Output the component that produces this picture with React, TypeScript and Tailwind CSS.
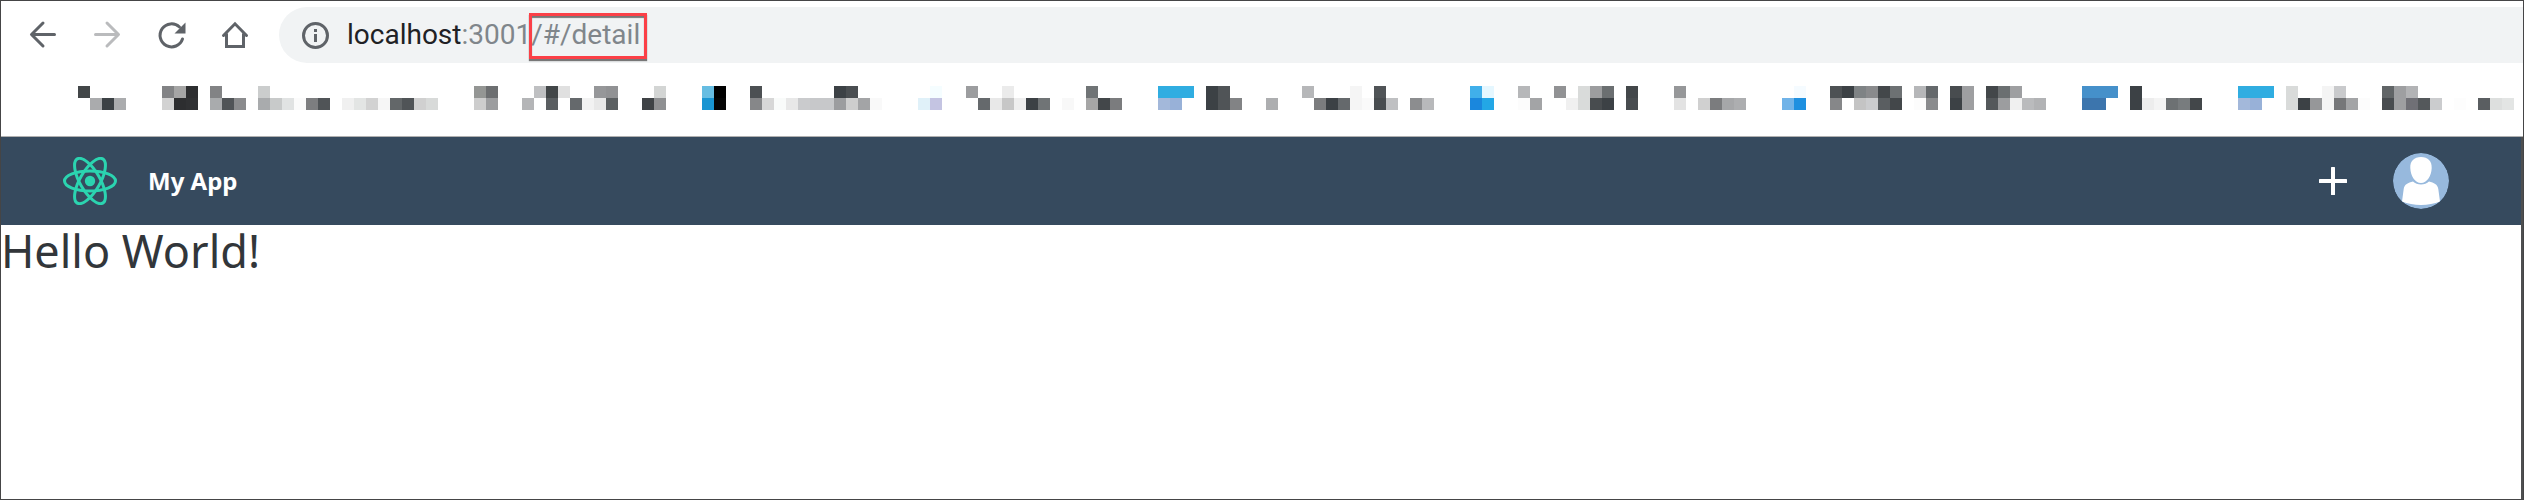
type Cell = [column: number, row: 0 | 1, colors: string];

const CELL = 12;

const mosaic: Cell[] = [
  [6, 0, "424648"],
  [7, 1, "aaabad 3c4145 abacae"],
  [13, 0, "828385 a5a5a5 2d2e30"],
  [13, 1, "d2d2d2 2d2e30 303133"],
  [17, 0, "828385"],
  [17, 1, "a9abad 505457 8a8b8d"],
  [21, 0, "cbcdcd"],
  [21, 1, "a9abad c8caca e1e3e3 fbfbfb 7d7e80 505457"],
  [28, 1, "f0f0f0 e3e5e4 d2d2d2 f6f6f6 636769 505457 d0d0d0 d8dad9"],
  [39, 0, "949694 6d6f71"],
  [39, 1, "cdcdcd 9c9d9f"],
  [43, 1, "b4b5b7"],
  [44, 0, "bfc0c2 424648 e0e0e0"],
  [45, 1, "5a5e61"],
  [47, 1, "65696c f2f2f2 e8e8e8 5c6062"],
  [49, 0, "969799 919294"],
  [53, 1, "3f4346 8f9092"],
  [54, 0, "d3d5d4"],
  [58, 0, "66bde2 000000"],
  [58, 1, "1995d2 050505"],
  [62, 0, "4c5053"],
  [62, 1, "868789 d7d7d7 f9fbfa e8e8e8 cacbcd c7c8ca c7c8ca 9c9d9f cecece a3a4a6 f9f9f9"],
  [69, 0, "3c4145 4a4e51"],
  [76, 1, "e0f1f9 c4c4e2"],
  [77, 0, "f5fdff"],
  [80, 0, "9c9d9f"],
  [81, 1, "65696c e8e8e8 c7c7c7 eeeeee 3c4145 707476"],
  [83, 0, "ebebeb"],
  [88, 1, "f8f8f8"],
  [90, 0, "707476"],
  [90, 1, "a6a6a6 43474a 7b7c7e"],
  [96, 0, "30ade1 30ade1 30ade1"],
  [96, 1, "a3b8da 98b1d8"],
  [100, 0, "3c4145 505457"],
  [100, 1, "3c4145 505457 828385"],
  [105, 1, "adaeb0"],
  [108, 0, "b6b7b9"],
  [109, 1, "7b7c7e 3c4145 65696c f5f5f5 fafafa 484c4f bfc0c2"],
  [112, 0, "f5f5f5"],
  [114, 0, "505457"],
  [117, 1, "8c8d8f b8b9bb"],
  [122, 0, "40afea e5f7ff"],
  [122, 1, "1a87dd 23a7e6"],
  [126, 0, "b6b7b9"],
  [126, 1, "fcfcfc a3a4a6"],
  [129, 0, "919294"],
  [130, 1, "f0f0f0 d9dbda 484c4f 3c4145"],
  [131, 0, "d9dbda 9c9d9f 6b6f71"],
  [135, 0, "43474a"],
  [135, 1, "484c4f"],
  [139, 0, "969799"],
  [139, 1, "e3e3e3"],
  [141, 1, "d0d0d0 7b7c7e a6a7a9 adaeb0"],
  [148, 1, "70b3e8 1e90e0"],
  [149, 0, "f5fbff"],
  [152, 0, "4d5154 3c4145 7f8385 8a8b8d 43474a 6d7173"],
  [152, 1, "868789"],
  [154, 1, "c4c4c4 cbccce 5a5e61 43474a"],
  [159, 0, "b6b7b9 65696c"],
  [159, 1, "fcfcfc 8a8b8d"],
  [162, 0, "484c4f 9e9fa1"],
  [162, 1, "3c4145 9e9fa1"],
  [165, 0, "43474a 6b6f71 9e9fa1"],
  [165, 1, "54585b 9c9d9f f0f0f0 babbbd b2b3b5"],
  [173, 0, "4590ca 4590ca 4590ca"],
  [173, 1, "3c75ad 3c75ad"],
  [177, 0, "3c4145"],
  [177, 1, "3c4145 ededed f4f4f4 6d7173 787c7e 43474a"],
  [186, 0, "30ade1 30ade1 30ade1"],
  [186, 1, "a3b8da 98b1d8"],
  [190, 0, "d9dbda"],
  [190, 1, "d9dbda 3c4145 969799 f4f4f4 767779 a3a4a6 fcfcfc"],
  [193, 0, "f4f4f4 c9cacc"],
  [198, 0, "616567 9e9fa1 b2b3b5"],
  [198, 1, "484c4f 9e9fa1 707076 54585b cbccce"],
  [204, 1, "fdfdfd"],
  [206, 1, "5a5e61 dddfde e3e5e4"],
];

function BookmarksBar() {
  return (
    <div className="flex h-[74px] overflow-hidden border-b border-[#b0b0b0] pl-[5px] pt-[23px]">
      <svg width={2514} height={24} className="shrink-0" shapeRendering="crispEdges" aria-hidden="true">
        {mosaic.flatMap(([column, row, colors]) =>
          colors.split(" ").map((color, i) => (
            <rect
              key={`${column + i}-${row}`}
              x={(column + i) * CELL}
              y={row * CELL}
              width={CELL}
              height={CELL}
              fill={`#${color}`}
            />
          )),
        )}
      </svg>
    </div>
  );
}

const stroke = {
  fill: "none",
  stroke: "currentColor",
  strokeWidth: 3,
  strokeLinecap: "round" as const,
  strokeLinejoin: "round" as const,
};

function BrowserToolbar() {
  return (
    <div className="flex h-[62px] items-center pl-[26px] pt-[6px]">
      <div className="flex gap-8 text-[#5f6368]">
        <button type="button" aria-label="Back" className="size-8">
          <svg viewBox="0 0 32 32" {...stroke}>
            <path d="M27.500 15.500H5M16 4 4.500 15.500 16 27" />
          </svg>
        </button>
        <button type="button" aria-label="Forward" className="size-8 text-[#babbbd]">
          <svg viewBox="0 0 32 32" {...stroke}>
            <path d="M4.500 15.500H27M16 4 27.500 15.500 16 27" />
          </svg>
        </button>
        <button type="button" aria-label="Reload" className="size-8">
          <svg viewBox="0 0 32 32" {...stroke}>
            <path d="M27.500 20A11.500 11.500 0 1 1 24.500 8" />
            <path d="M30.500 3.500V14.500H19.500Z" fill="currentColor" stroke="none" />
          </svg>
        </button>
        <button type="button" aria-label="Home" className="size-8">
          <svg viewBox="0 0 32 32" {...stroke} strokeLinejoin="miter">
            <path d="M4.500 16.500 16 4.800 27.500 16.500M7.500 15V27.500H24.500V15" />
          </svg>
        </button>
      </div>
      <div className="ml-[28px] flex h-14 flex-1 items-center rounded-l-full bg-[#f1f3f4] pl-[22px]">
        <svg width={28} height={28} viewBox="0 0 28 28" className="mr-[18px] text-[#5f6368]" aria-hidden="true">
          <circle cx="14.500" cy="14.500" r="12" fill="none" stroke="currentColor" strokeWidth="3" />
          <path d="M13 8h3v3h-3zM13 13h3v8h-3z" fill="currentColor" />
        </svg>
        <div className="flex items-center whitespace-nowrap font-['Roboto',sans-serif] text-[28px] leading-9 text-[#80868b]">
          <span className="text-[#202124]">localhost</span>
          <span>:3001</span>
          <span className="relative">
            /#/detail
            <span className="absolute -left-[2px] -top-1 h-[46px] w-[118px] border-[3px] border-[#fb4047] shadow-[0_2px_1px_#777,inset_0_2px_1px_#777]" />
          </span>
        </div>
      </div>
    </div>
  );
}

function ReactLogo() {
  return (
    <svg width={56} height={48} viewBox="-28 -24 56 48" fill="none" stroke="#2bd4b0" strokeWidth="3" aria-hidden="true">
      <circle r="5.200" fill="#2bd4b0" stroke="none" />
      <ellipse rx="25.500" ry="10" />
      <ellipse rx="25.500" ry="10" transform="rotate(60)" />
      <ellipse rx="25.500" ry="10" transform="rotate(120)" />
    </svg>
  );
}

function AppHeader() {
  return (
    <header className="flex h-[88px] items-center bg-[#364a5e] pl-[61px] pr-[72px]">
      <ReactLogo />
      <span className="ml-[30px] font-['Noto_Sans',sans-serif] text-2xl font-bold text-white">My App</span>
      <button type="button" aria-label="Add" className="ml-auto mr-[46px] size-7">
        <svg viewBox="0 0 28 28" fill="#fff">
          <rect x="12" width="4" height="28" rx="0.500" />
          <rect y="12" width="28" height="4" rx="0.500" />
        </svg>
      </button>
      <button type="button" aria-label="Account" className="size-14 overflow-hidden rounded-full">
        <svg viewBox="0 0 56 56">
          <circle cx="28" cy="28" r="28" fill="#97b9dd" />
          <path
            d="M20 28.500C15 30 11.500 31 10.700 36L9 48.500C20 53 36 53 47 48.500L45.300 36C44.500 31 41 30 36 28.500C32 32.500 24 32.500 20 28.500Z"
            fill="#fff"
          />
          <path
            d="M28 4C35 4 39 8 38.700 15C38.400 23 34 30 28 30S17.600 23 17.300 15C17 8 21 4 28 4Z"
            fill="#fff"
          />
        </svg>
      </button>
    </header>
  );
}

export default function App() {
  return (
    <div className="flex min-h-screen flex-col border border-[#454546] bg-white">
      <BrowserToolbar />
      <BookmarksBar />
      <div className="flex flex-1 flex-col border-r-2 border-[#4e4f50]">
        <AppHeader />
        <main className="font-['Noto_Sans',sans-serif] text-[45px] leading-[52px] text-[#32363a]">Hello World!</main>
      </div>
    </div>
  );
}
